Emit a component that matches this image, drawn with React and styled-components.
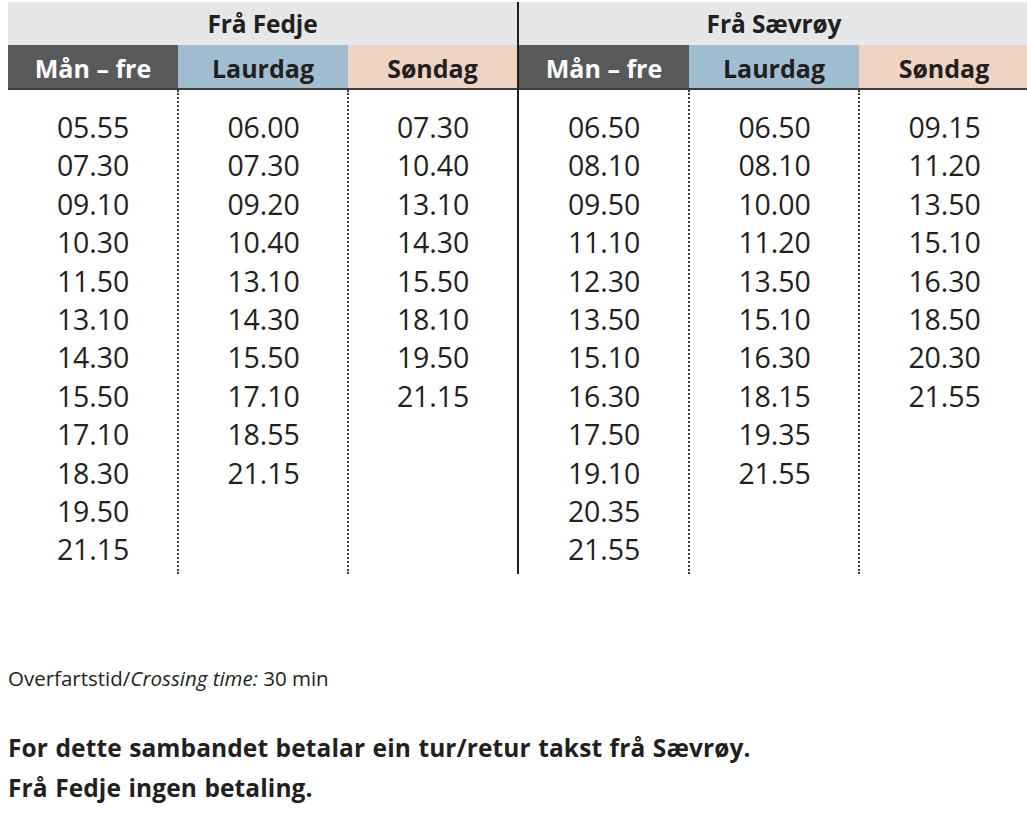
import React from "react";
import styled, { createGlobalStyle } from "styled-components";

const Global = createGlobalStyle`
  html, body { margin: 0; padding: 0; background: #fff; }
  body { font-family: "Open Sans", "Noto Sans", sans-serif; color: #231f20; }
`;

const Page = styled.div`
  padding: 2px 0 0 8px;
  width: 1019px;
`;

const Table = styled.div`
  display: flex;
`;

const Group = styled.section`
  flex: 0 0 ${(p) => p.$w}px;
  display: flex;
  flex-direction: column;
  border-right: ${(p) => (p.$divider ? "2px solid #231f20" : "none")};
`;

const Title = styled.div`
  height: 43px;
  background: #e6e7e8;
  display: flex;
  align-items: center;
  justify-content: center;
  font-weight: 700;
  font-size: 24.5px;
  letter-spacing: -0.1px;
`;

const HeadRow = styled.div`
  display: grid;
  grid-template-columns: ${(p) => p.$cols};
  border-bottom: 2px solid #3d3d3f;
`;

const HeadCell = styled.div`
  height: 43px;
  display: flex;
  align-items: center;
  justify-content: center;
  font-weight: 700;
  font-size: 25px;
  letter-spacing: 0;
  padding-top: 2px;
  box-sizing: border-box;
  background: ${(p) => p.$bg};
  color: ${(p) => p.$fg};
`;

const Body = styled.div`
  display: grid;
  grid-template-columns: ${(p) => p.$cols};
  height: 484px;
`;

const Col = styled.div`
  padding-top: 18px;
  display: flex;
  flex-direction: column;
  align-items: center;
  border-left: ${(p) => (p.$dotted ? "2px dotted #3d3d3f" : "none")};
  margin-left: ${(p) => (p.$dotted ? "-1px" : "0")};
`;

const Time = styled.div`
  font-size: 28.5px;
  line-height: 38.4px;
  letter-spacing: -0.1px;
`;

const Footer = styled.div`
  padding-top: 92px;
`;

const Note = styled.p`
  margin: 0;
  font-size: 20.5px;
  line-height: 24px;
  letter-spacing: 0;
  em { font-style: italic; }
`;

const Bold = styled.p`
  margin: 0;
  font-weight: 700;
  font-size: 24.5px;
  line-height: 40px;
  letter-spacing: 0.1px;
  word-spacing: 1px;
`;

const BoldBlock = styled.div`
  margin-top: 38px;
`;

const heads = [
  { label: "Mån – fre", bg: "#58595b", fg: "#ffffff" },
  { label: "Laurdag", bg: "#a1bdd1", fg: "#231f20" },
  { label: "Søndag", bg: "#efd3c3", fg: "#231f20" },
];

const groups = [
  {
    title: "Frå Fedje",
    w: 509,
    cols: "170px 170px 1fr",
    divider: true,
    data: [
      ["05.55", "07.30", "09.10", "10.30", "11.50", "13.10", "14.30", "15.50", "17.10", "18.30", "19.50", "21.15"],
      ["06.00", "07.30", "09.20", "10.40", "13.10", "14.30", "15.50", "17.10", "18.55", "21.15"],
      ["07.30", "10.40", "13.10", "14.30", "15.50", "18.10", "19.50", "21.15"],
    ],
  },
  {
    title: "Frå Sævrøy",
    w: 510,
    cols: "170px 170px 1fr",
    divider: false,
    data: [
      ["06.50", "08.10", "09.50", "11.10", "12.30", "13.50", "15.10", "16.30", "17.50", "19.10", "20.35", "21.55"],
      ["06.50", "08.10", "10.00", "11.20", "13.50", "15.10", "16.30", "18.15", "19.35", "21.55"],
      ["09.15", "11.20", "13.50", "15.10", "16.30", "18.50", "20.30", "21.55"],
    ],
  },
];

export default function App() {
  return (
    <Page>
      <Global />
      <Table>
        {groups.map((g) => (
          <Group key={g.title} $w={g.w} $divider={g.divider}>
            <Title>{g.title}</Title>
            <HeadRow $cols={g.cols}>
              {heads.map((h) => (
                <HeadCell key={h.label} $bg={h.bg} $fg={h.fg}>
                  {h.label}
                </HeadCell>
              ))}
            </HeadRow>
            <Body $cols={g.cols}>
              {g.data.map((col, i) => (
                <Col key={i} $dotted={i > 0}>
                  {col.map((t, j) => (
                    <Time key={j}>{t}</Time>
                  ))}
                </Col>
              ))}
            </Body>
          </Group>
        ))}
      </Table>
      <Footer>
        <Note>
          Overfartstid/<em>Crossing time:</em> 30 min
        </Note>
        <BoldBlock>
          <Bold>For dette sambandet betalar ein tur/retur takst frå Sævrøy.</Bold>
          <Bold>Frå Fedje ingen betaling.</Bold>
        </BoldBlock>
      </Footer>
    </Page>
  );
}
